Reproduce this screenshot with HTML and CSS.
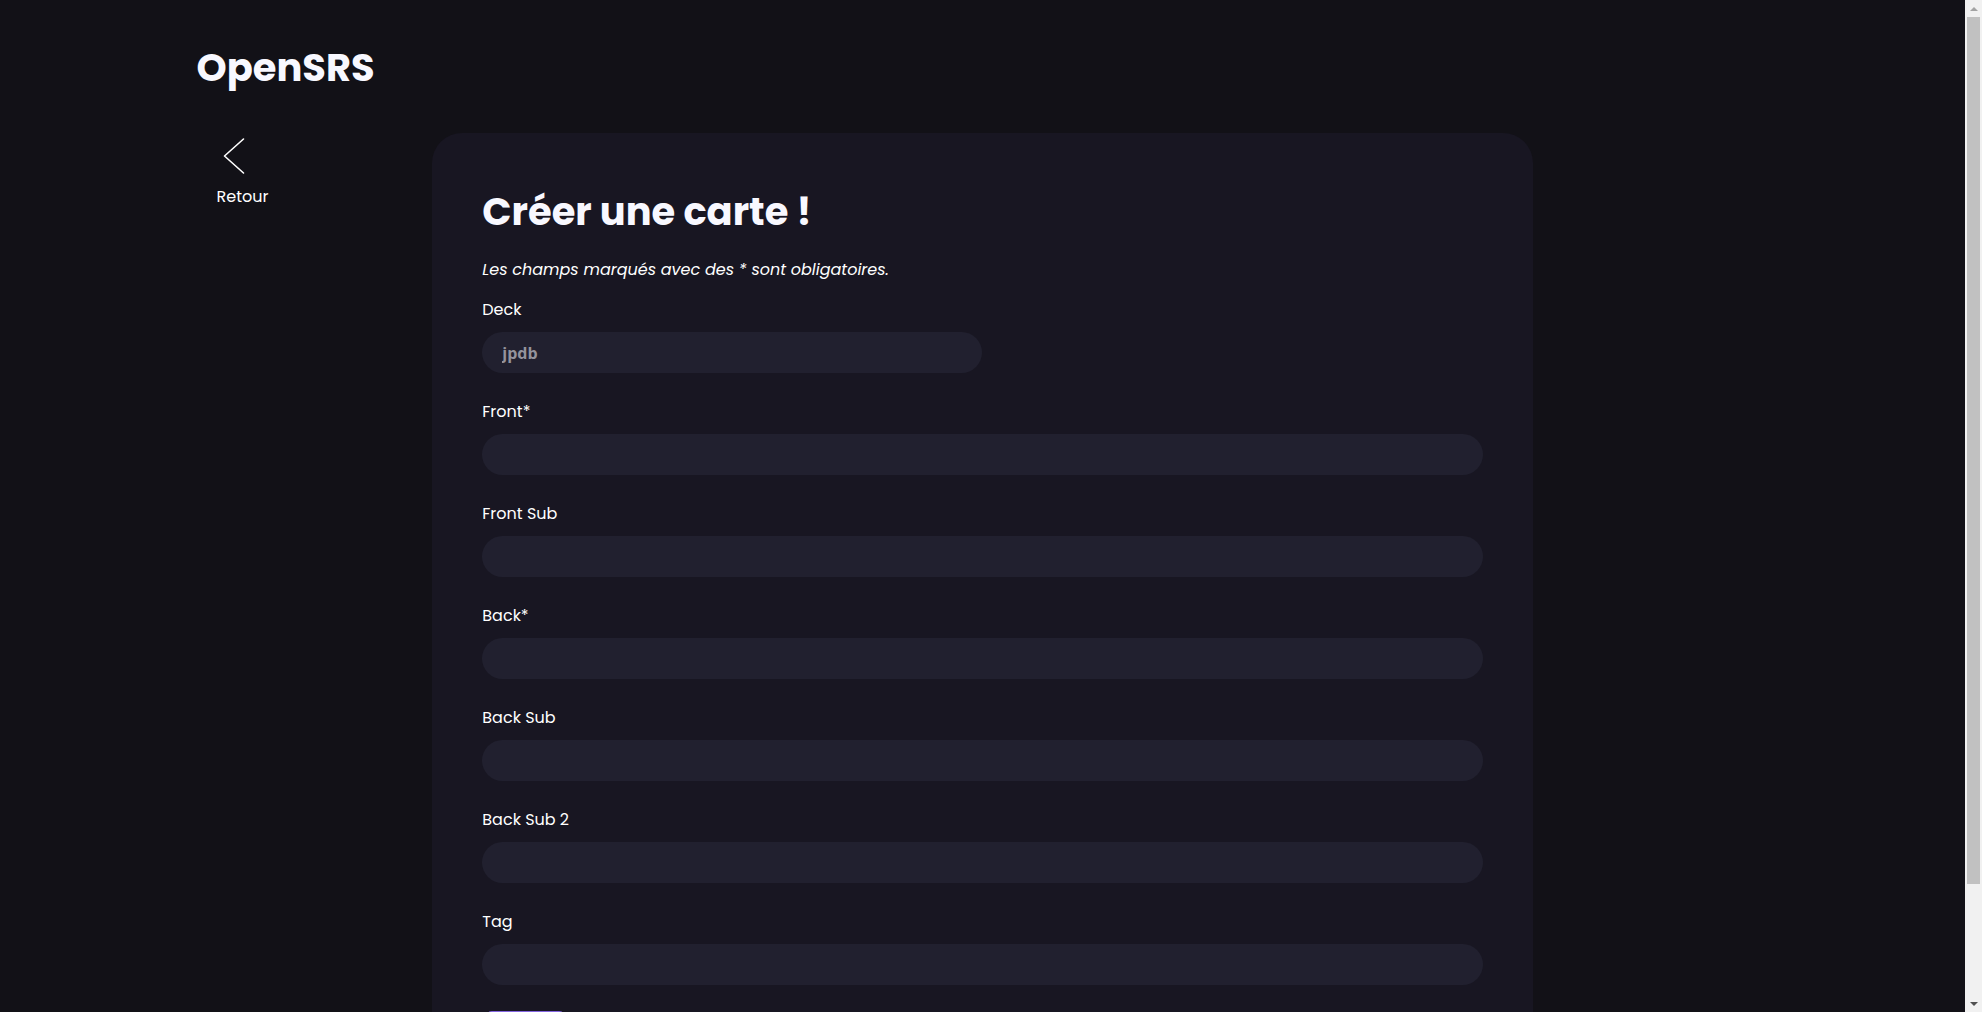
FILE: index.html
```html
<!DOCTYPE html>
<html lang="fr">
<head>
<meta charset="utf-8">
<title>OpenSRS</title>
<link rel="stylesheet" href="styles.css">
</head>
<body>
<div class="page">
  <header class="header">
    <div class="logo">OpenSRS</div>
  </header>
  <main class="layout">
    <aside class="side">
      <a class="back" href="#">
        <svg class="back-icon" width="40" height="40" viewBox="0 0 40 40" fill="none" stroke="#ffffff" stroke-width="1.6" stroke-linecap="round" stroke-linejoin="round"><path d="M21.5 2 L2.5 19 L21.5 36"/></svg>
        <span class="back-label">Retour</span>
      </a>
    </aside>
    <section class="card">
      <h1 class="title">Créer une carte !</h1>
      <p class="note">Les champs marqués avec des * sont obligatoires.</p>
      <form class="form">
        <div class="field">
          <label class="label">Deck</label>
          <input class="input input-deck" type="text" value="jpdb" disabled>
        </div>
        <div class="field">
          <label class="label">Front*</label>
          <input class="input" type="text">
        </div>
        <div class="field">
          <label class="label">Front Sub</label>
          <input class="input" type="text">
        </div>
        <div class="field">
          <label class="label">Back*</label>
          <input class="input" type="text">
        </div>
        <div class="field">
          <label class="label">Back Sub</label>
          <input class="input" type="text">
        </div>
        <div class="field">
          <label class="label">Back Sub 2</label>
          <input class="input" type="text">
        </div>
        <div class="field">
          <label class="label">Tag</label>
          <input class="input" type="text">
        </div>
        <button class="submit" type="button">Créer</button>
      </form>
    </section>
    <div class="spacer"></div>
  </main>
</div>
<div class="scrollbar" aria-hidden="true">
  <div class="sb-btn"><span class="sb-arrow sb-up"></span></div>
  <div class="sb-track"><div class="sb-thumb"></div></div>
  <div class="sb-btn"><span class="sb-arrow sb-down"></span></div>
</div>
</body>
</html>
```

FILE: styles.css
```css
* { box-sizing: border-box; }
html, body { margin: 0; padding: 0; }
body {
  background: #121117;
  color: #ffffff;
  font-family: "Poppins", "Inter", "Noto Sans", sans-serif;
  padding-right: 17px;
}
.page {
  width: 1572px;
  margin: 0 auto;
  padding-bottom: 37px;
}
.header {
  padding-top: 44px;
  margin-bottom: 41px;
}
.logo {
  font-size: 38.4px;
  line-height: 48px;
  font-weight: 700;
  color: #f8f8ff;
}
.layout {
  display: grid;
  grid-template-columns: 15% 70% 15%;
  align-items: start;
}
.side {
  padding-left: 20px;
  padding-top: 4px;
}
.back {
  display: inline-flex;
  flex-direction: column;
  align-items: center;
  text-decoration: none;
  color: #ffffff;
}
.back-icon { display: block; }
.back-label {
  font-size: 16px;
  line-height: 24px;
  margin-top: 8px;
  font-weight: 400;
}
.card {
  background: #181622;
  border-radius: 30px;
  padding: 50px 50px 50px;
}
.title {
  margin: 6px 0 0;
  font-size: 38.4px;
  line-height: 46px;
  font-weight: 700;
  color: #f8f8ff;
}
.note {
  margin: 23px 0 0;
  font-size: 16px;
  line-height: 24px;
  font-style: italic;
}
.form {
  display: flex;
  flex-direction: column;
  margin-top: 16px;
}
.field {
  display: flex;
  flex-direction: column;
  gap: 10px;
  margin-bottom: 27px;
}
.label {
  font-size: 16px;
  line-height: 24px;
  font-weight: 400;
}
.input {
  width: 100%;
  height: 41px;
  border: none;
  outline: none;
  border-radius: 21px;
  background: #21202f;
  color: #ffffff;
  padding: 0 20px;
  font-size: 16px;
  font-family: inherit;
}
.input-deck {
  width: 500px;
  color: #94939c;
  font-family: "Open Sans", "Noto Sans", sans-serif;
  font-weight: 700;
  font-size: 16px;
}
.submit {
  align-self: flex-start;
  margin-top: -1px;
  margin-left: 2px;
  height: 44px;
  padding: 0 18px;
  border: 1px solid #8466e0;
  border-radius: 8px;
  background: #6a4cc4;
  color: #ffffff;
  font-family: inherit;
  font-size: 16px;
  font-weight: 500;
}

/* fake classic scrollbar, overlaying the right edge */
.scrollbar {
  position: fixed;
  top: 0;
  right: 0;
  width: 17px;
  height: 100vh;
  background: #f1f1f1;
  display: flex;
  flex-direction: column;
}
.sb-btn {
  height: 17px;
  flex: none;
  display: flex;
  align-items: center;
  justify-content: center;
}
.sb-arrow {
  width: 0;
  height: 0;
  border-left: 4px solid transparent;
  border-right: 4px solid transparent;
}
.sb-up { border-bottom: 4px solid #a3a3a3; }
.sb-down { border-top: 4px solid #505050; }
.sb-track {
  flex: 1;
  padding: 0 2px;
}
.sb-thumb {
  height: 88.6%;
  background: #c1c1c1;
}
```
